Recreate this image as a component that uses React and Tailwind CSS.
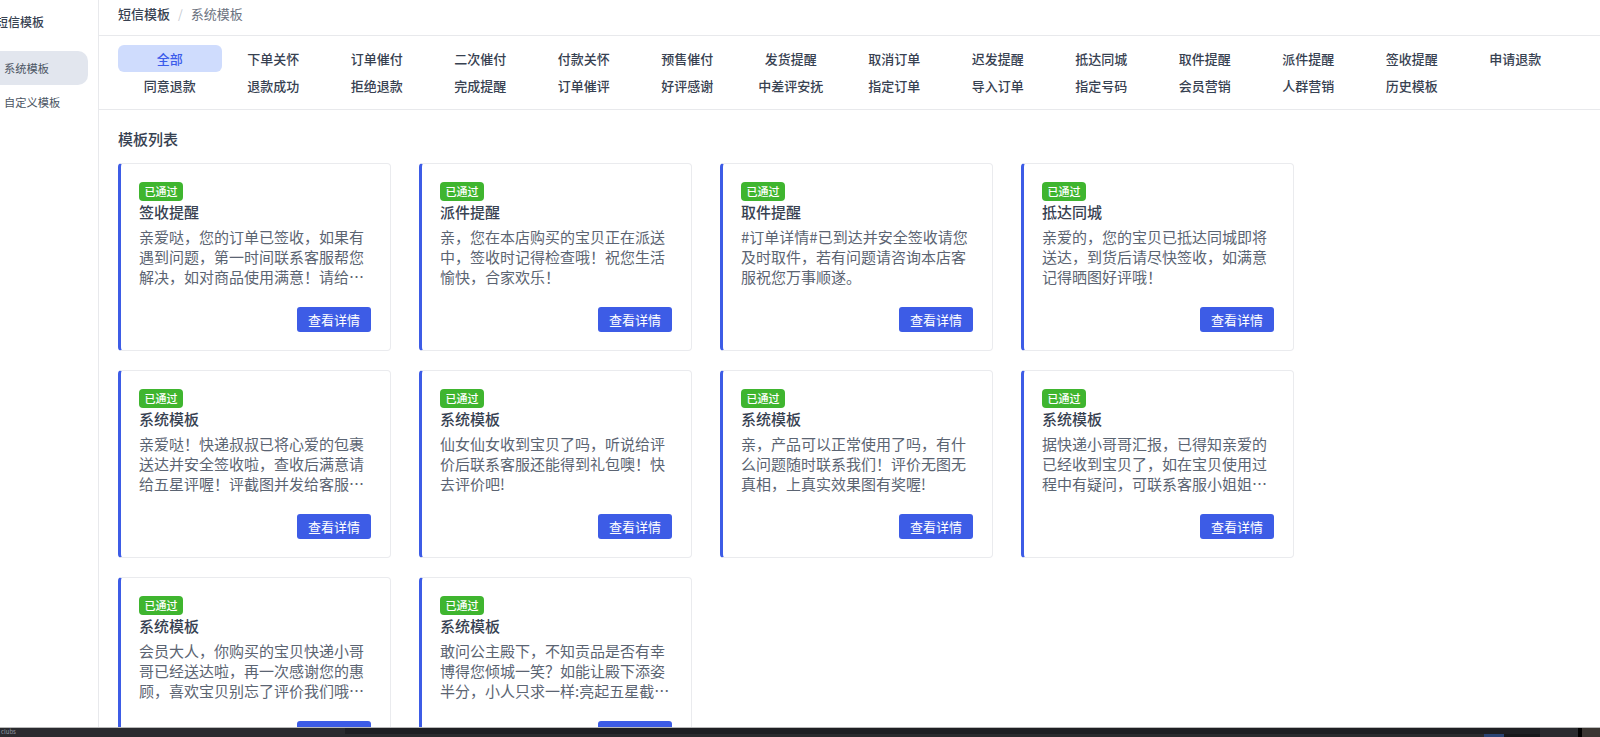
import React from "react";

const tabs = [
  "全部", "下单关怀", "订单催付", "二次催付", "付款关怀", "预售催付", "发货提醒", "取消订单", "迟发提醒", "抵达同城", "取件提醒", "派件提醒", "签收提醒", "申请退款",
  "同意退款", "退款成功", "拒绝退款", "完成提醒", "订单催评", "好评感谢", "中差评安抚", "指定订单", "导入订单", "指定号码", "会员营销", "人群营销", "历史模板",
];

const cards = [
  ["签收提醒", "亲爱哒\uFF0C您的订单已签收\uFF0C如果有遇到问题\uFF0C第一时间联系客服帮您解决\uFF0C如对商品使用满意\uFF01请给个五星好评"],
  ["派件提醒", "亲\uFF0C您在本店购买的宝贝正在派送中\uFF0C签收时记得检查哦\uFF01祝您生活愉快\uFF0C合家欢乐\uFF01"],
  ["取件提醒", "#订单详情#已到达并安全签收请您及时取件\uFF0C若有问题请咨询本店客服祝您万事顺遂。"],
  ["抵达同城", "亲爱的\uFF0C您的宝贝已抵达同城即将送达\uFF0C到货后请尽快签收\uFF0C如满意记得晒图好评哦\uFF01"],
  ["系统模板", "亲爱哒\uFF01快递叔叔已将心爱的包裹送达并安全签收啦\uFF0C查收后满意请给五星评喔\uFF01评截图并发给客服领取"],
  ["系统模板", "仙女仙女收到宝贝了吗\uFF0C听说给评价后联系客服还能得到礼包噢\uFF01快去评价吧!"],
  ["系统模板", "亲\uFF0C产品可以正常使用了吗\uFF0C有什么问题随时联系我们\uFF01评价无图无真相\uFF0C上真实效果图有奖喔!"],
  ["系统模板", "据快递小哥哥汇报\uFF0C已得知亲爱的已经收到宝贝了\uFF0C如在宝贝使用过程中有疑问\uFF0C可联系客服小姐姐为您解决"],
  ["系统模板", "会员大人\uFF0C你购买的宝贝快递小哥哥已经送达啦\uFF0C再一次感谢您的惠顾\uFF0C喜欢宝贝别忘了评价我们哦\uFF0C期待"],
  ["系统模板", "敢问公主殿下\uFF0C不知贡品是否有幸博得您倾城一笑\uFF1F如能让殿下添姿半分\uFF0C小人只求一样:亮起五星截图发给"],
];

function Sidebar() {
  return (
    <div className="w-[99px] shrink-0 border-r border-[#e8e9ec] overflow-hidden">
      <div className="w-[88px]">
        <div className="h-[51px] pt-[13px] -ml-[4px] text-[12px] leading-[18px] font-medium text-[#374151] whitespace-nowrap">
          短信模板
        </div>
        <div className="h-[34px] rounded-r-[10px] bg-[#e2e6ee] flex items-center pl-[4px] text-[11.25px] text-[#4b5563]">
          系统模板
        </div>
        <div className="h-[34px] flex items-center pl-[4px] text-[11.25px] text-[#4b5563]">
          自定义模板
        </div>
      </div>
    </div>
  );
}

function Card({ title, text }) {
  return (
    <div className="h-[188px] rounded-[4px] border border-[#eaebee] border-l-[3px] border-l-[#3d5ce6] pt-[18px] pl-[18px] pr-[19px] pb-[18px] flex flex-col items-start">
      <span className="h-[19px] w-[44px] rounded-[4px] bg-[#3fb52f] text-white text-[11px] font-medium leading-[19px] text-center">
        已通过
      </span>
      <div className="text-[15px] leading-[22px] font-medium text-[#374151]">{title}</div>
      <p className="mt-[4px] w-full text-[15px] leading-[20px] text-[#5b6472] line-clamp-3 break-all">{text}</p>
      <button className="mt-auto self-end w-[74px] h-[25px] rounded-[3px] bg-[#3d5ce6] text-white text-[13px] leading-[25px]">
        查看详情
      </button>
    </div>
  );
}

export default function App() {
  return (
    <div className="h-[737px] w-full flex flex-col overflow-hidden bg-white font-['Noto_Sans_CJK_SC','Noto_Sans',sans-serif]">
      <div className="flex-1 min-h-0 flex">
        <Sidebar />
        <div className="flex-1 min-w-0 overflow-hidden">
          <div className="h-[36px] border-b border-[#e8e9ec] pl-[19px] flex items-center pb-[8px] text-[13px]">
            <span className="font-medium text-[#374151]">短信模板</span>
            <span className="mx-[8px] text-[#c4c8cf] text-[12px]">/</span>
            <span className="text-[#6b7280]">系统模板</span>
          </div>
          <div className="h-[74px] border-b border-[#e8e9ec] pl-[19px] pt-[9px]">
            <div className="grid grid-cols-[repeat(14,103.5px)] auto-rows-[27px]">
              {tabs.map((t, i) => (
                <div
                  key={t}
                  className={
                    i === 0
                      ? "rounded-[6px] bg-[#cfdcfd] text-[#3b5bea] text-[13px] font-medium flex items-center justify-center"
                      : "text-[#374151] text-[13px] font-medium flex items-center justify-center"
                  }
                >
                  {t}
                </div>
              ))}
            </div>
          </div>
          <div className="pl-[19px] pt-[18px]">
            <h2 className="h-[22px] text-[15px] leading-[22px] font-medium text-[#374151]">模板列表</h2>
            <div className="mt-[13px] grid grid-cols-[repeat(4,273px)] gap-x-[28px] gap-y-[19px]">
              {cards.map((c, i) => (
                <Card key={i} title={c[0]} text={c[1]} />
              ))}
            </div>
          </div>
        </div>
      </div>
      {/* taskbar strip at the bottom of the capture */}
      <div className="h-[10px] shrink-0 border-t border-[#b9b9b9] bg-[#1e1f23] flex items-end">
        <div className="w-[345px] h-full bg-[#2a2b2f] text-[6px] leading-[7px] text-[#8f97a3] pl-[1px] overflow-hidden">clubs</div>
        <div className="flex-1 h-[3px] bg-[#2a2b2e]"></div>
        <div className="w-[20px] h-[3px] bg-[#2a4474]"></div>
        <div className="w-[36px] h-[3px] bg-[#17181b]"></div>
        <div className="w-[38px] h-full bg-[#2a2b2f]"></div>
        <div className="w-[4px] h-full bg-black"></div>
        <div className="w-[18px] h-full bg-[#3a3532]"></div>
      </div>
    </div>
  );
}
